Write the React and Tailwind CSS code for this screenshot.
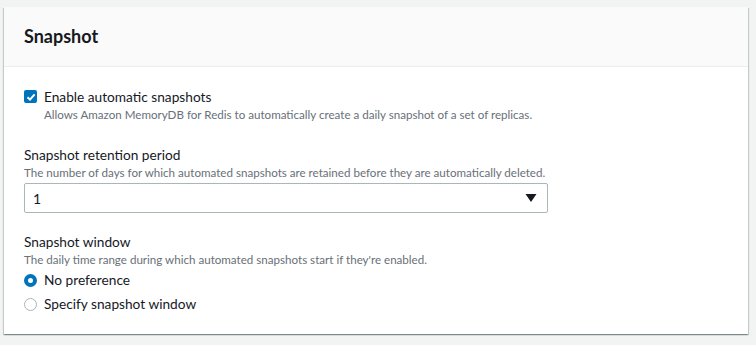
import React, { useState } from "react";

const Radio = ({ checked, label, onClick }) => (
  <label className="flex items-center gap-[7px] cursor-pointer" onClick={onClick}>
    {checked ? (
      <span className="w-[13px] h-[13px] rounded-full border-[4px] border-[#0073bb] bg-white" />
    ) : (
      <span className="w-[13px] h-[13px] rounded-full border-[1.5px] border-[#aab7b8] bg-white" />
    )}
    <span className="text-[13.7px] leading-[20px] text-[#16191f]">{label}</span>
  </label>
);

const App = () => {
  const [enabled, setEnabled] = useState(true);
  const [windowPref, setWindowPref] = useState("none");

  return (
    <div className="min-h-[345px] bg-[#f2f3f3] pt-[7px] pl-[4px] pr-[8px] font-['Lato',sans-serif]">
      <div className="bg-white shadow-[0_1px_1px_0_rgba(0,28,36,0.3),1px_1px_1px_0_rgba(0,28,36,0.15),-1px_1px_1px_0_rgba(0,28,36,0.15)]">
        <div className="h-[60px] bg-[#fafafa] border-b border-[#eaeded] flex items-center px-[20px]">
          <h2 className="text-[18px] font-bold text-[#16191f]">Snapshot</h2>
        </div>
        <div className="px-[20px] pt-[20px] pb-[20px] flex flex-col">
          <div className="flex gap-[7px]">
            <button
              onClick={() => setEnabled(!enabled)}
              className={`mt-[3px] w-[13px] h-[13px] rounded-[2px] flex items-center justify-center ${enabled ? "bg-[#0073bb]" : "border-2 border-[#aab7b8]"}`}
            >
              {enabled && (
                <svg width="10" height="10" viewBox="0 0 10 10">
                  <path d="M1.5 5.2 L4 7.6 L8.6 2.4" fill="none" stroke="white" strokeWidth="2" />
                </svg>
              )}
            </button>
            <div className="flex flex-col">
              <span className="text-[13.7px] leading-[20px] text-[#16191f]">Enable automatic snapshots</span>
              <span className="text-[11.6px] leading-[16px] text-[#687078]">
                Allows Amazon MemoryDB for Redis to automatically create a daily snapshot of a set of replicas.
              </span>
            </div>
          </div>

          <div className="mt-[22px] flex flex-col">
            <span className="text-[13.7px] leading-[20px] text-[#16191f]">Snapshot retention period</span>
            <span className="text-[11.6px] leading-[16px] text-[#687078]">
              The number of days for which automated snapshots are retained before they are automatically deleted.
            </span>
            <div className="mt-[2px] w-[524px] h-[30px] border border-[#aab7b8] rounded-[2px] flex items-center justify-between pl-[8px] pr-[10px]">
              <span className="text-[14px] text-[#16191f]">1</span>
              <svg width="12" height="10" viewBox="0 0 12 10">
                <path d="M0.5 1 L11.5 1 L6 9 Z" fill="#16191f" />
              </svg>
            </div>
          </div>

          <div className="mt-[19px] flex flex-col">
            <span className="text-[13.7px] leading-[20px] text-[#16191f]">Snapshot window</span>
            <span className="text-[11.6px] leading-[16px] text-[#687078]">
              The daily time range during which automated snapshots start if they're enabled.
            </span>
            <div className="mt-[2px] flex flex-col gap-[4px]">
              <Radio checked={windowPref === "none"} label="No preference" onClick={() => setWindowPref("none")} />
              <Radio checked={windowPref === "custom"} label="Specify snapshot window" onClick={() => setWindowPref("custom")} />
            </div>
          </div>
        </div>
      </div>
    </div>
  );
};

export default App;
